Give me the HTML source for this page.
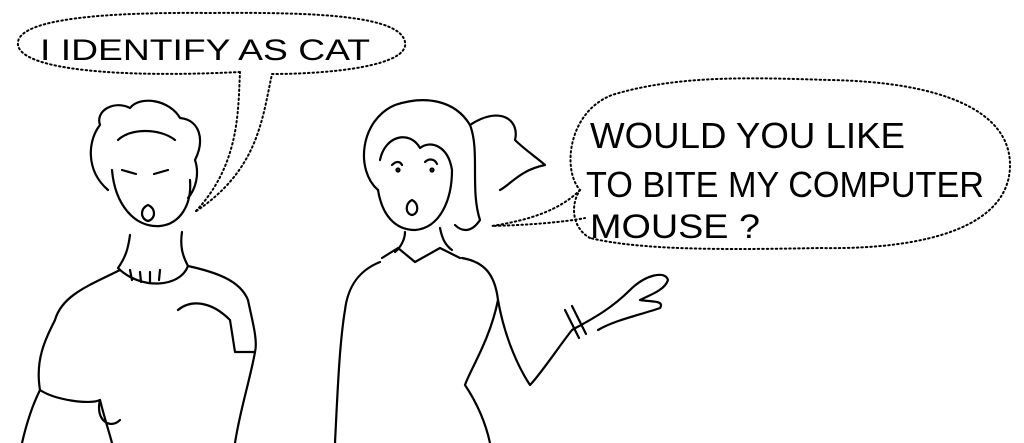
<!DOCTYPE html>
<html><head><meta charset="utf-8"><style>
html,body{margin:0;padding:0;background:#fff;}
svg{display:block}
text{font-family:"Liberation Sans",sans-serif;fill:#000;}
</style></head><body>
<svg width="1024" height="443" viewBox="0 0 1024 443" xmlns="http://www.w3.org/2000/svg">
<g fill="none" stroke="#000" stroke-width="2" stroke-dasharray="1.5 3" stroke-linecap="round">
<path d="M240 72 C120 78 22 70 18 45 C14 18 110 12 210 13 C320 12 400 16 405 42 C410 66 330 74 272 74 C262 120 258 170 195 212 C240 165 238 110 240 72"/>
<path d="M590 238 C572 228 570 205 580 190 C562 170 568 112 612 95 C680 74 760 78 830 80 C940 82 1010 110 1010 165 C1010 225 930 250 820 248 C720 250 640 250 590 238 Z"/>
<path d="M580 190 C560 210 530 220 492 226 C530 225 565 222 585 218"/>
</g>
<g>
<text x="40" y="60" font-size="30" textLength="330" lengthAdjust="spacingAndGlyphs">I IDENTIFY AS CAT</text>
<text x="590" y="148" font-size="36" textLength="315" lengthAdjust="spacingAndGlyphs">WOULD YOU LIKE</text>
<text x="586" y="197" font-size="36" textLength="398" lengthAdjust="spacingAndGlyphs">TO BITE MY COMPUTER</text>
<text x="590" y="238" font-size="34" textLength="170" lengthAdjust="spacingAndGlyphs">MOUSE ?</text>
</g>
<g fill="none" stroke="#000" stroke-width="2.2" stroke-linecap="round" stroke-linejoin="round">
<!-- left woman -->
<path d="M108 190 C85 170 88 140 100 125 C95 110 115 100 130 108 C140 95 170 100 180 118 C200 120 205 140 195 160 C200 175 195 190 188 198"/>
<path d="M118 140 C130 128 160 128 175 140"/>
<path d="M112 170 C115 205 135 228 160 226 C180 224 192 205 190 180"/>
<path d="M122 170 l14 4 M168 170 l-14 4"/>
<path d="M148 205 c-8 3 -8 14 0 16 c8 -2 8 -13 0 -16z"/>
<path d="M130 235 C128 250 125 258 118 268 C140 290 180 288 188 266 C182 255 180 245 182 232"/>
<path d="M120 270 C90 285 62 295 55 320 C45 340 35 360 40 390 C55 400 90 405 100 400 C95 420 110 430 120 420"/>
<path d="M188 266 C215 272 240 280 248 300 C252 320 258 340 255 352 L235 352 L230 320 C210 300 190 300 178 310"/>
<path d="M40 390 C30 410 25 430 22 443 M100 400 C105 420 110 435 112 443 M255 352 C250 380 240 410 235 443"/>
<path d="M130 270 l2 10 M140 272 l1 10 M150 272 l0 10 M160 270 l-1 10"/>
<!-- right woman -->
<path d="M378 190 C355 170 360 120 395 105 C425 95 455 100 470 125 C480 150 470 190 480 220 C470 235 460 230 455 225"/>
<path d="M470 125 C500 105 520 120 515 140 C525 150 540 160 545 165 C520 170 510 185 500 190"/>
<path d="M380 160 C385 135 410 130 420 148 C430 140 448 145 452 170 C452 200 440 228 415 230 C395 230 382 215 378 190"/>
<path d="M392 165 c4 -4 8 -4 10 0 M425 162 c4 -4 10 -3 12 2"/>
<circle cx="398" cy="170" r="1.5"/><circle cx="432" cy="170" r="1.5"/>
<path d="M412 200 c-7 3 -7 14 0 15 c7 -1 7 -12 0 -15z"/>
<path d="M405 232 C405 240 400 248 395 252 M440 228 C442 238 445 245 452 250"/>
<path d="M382 258 L398 248 L415 262 L440 248 L460 258"/>
<path d="M380 262 C360 270 348 285 345 310 C340 340 338 380 335 443"/>
<path d="M462 258 C485 262 495 275 498 300 C505 340 520 370 530 385 C540 375 560 345 572 330 C590 320 610 310 630 290 C645 275 665 270 668 280 C665 290 650 295 640 300 C650 302 665 300 660 308 C640 315 615 320 598 330"/>
<path d="M498 300 C490 340 470 370 465 385 C475 400 485 420 490 443"/>
<path d="M565 310 l14 28 M572 306 l14 28"/>
</g>
</svg>
</body></html>
